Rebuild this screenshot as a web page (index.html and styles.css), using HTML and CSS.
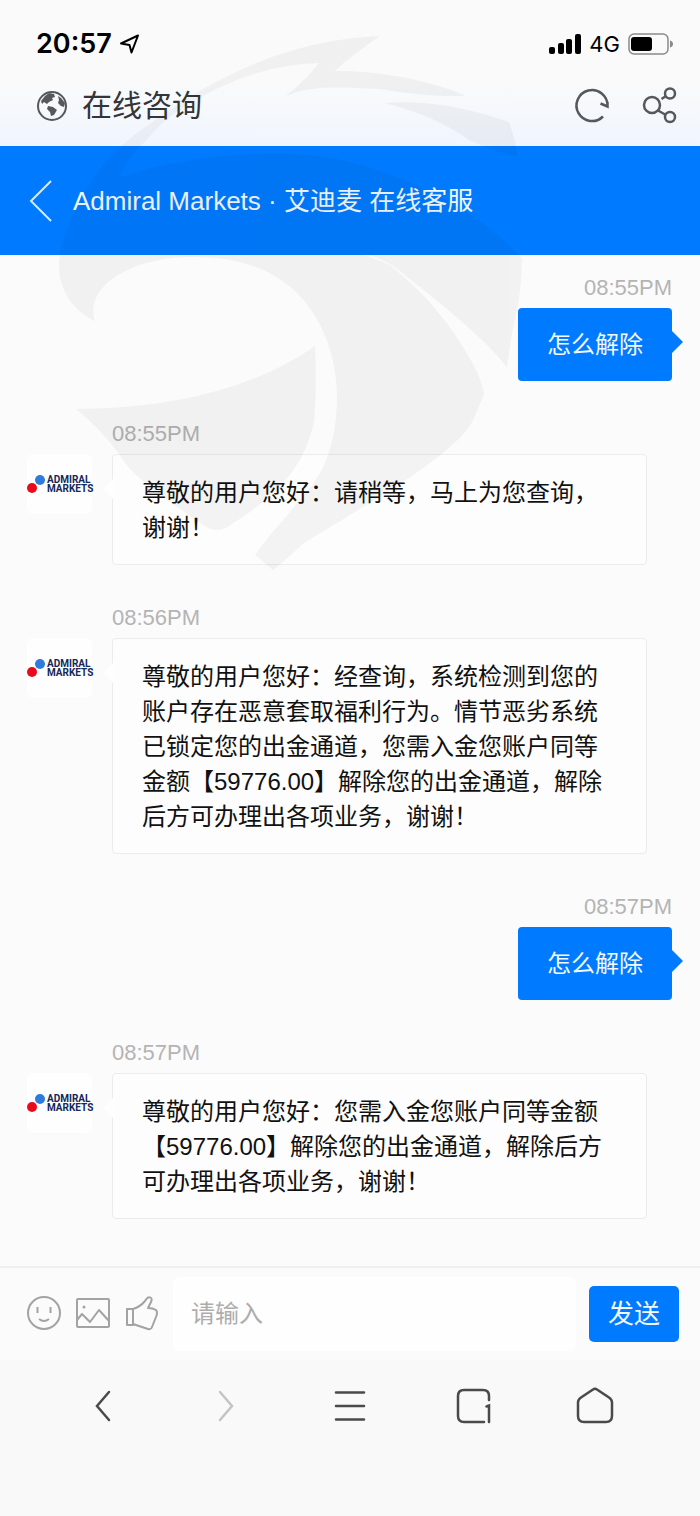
FILE: index.html
```html
<!DOCTYPE html>
<html lang="zh-CN">
<head>
<meta charset="utf-8">
<meta name="viewport" content="width=device-width, initial-scale=1">
<title>在线咨询</title>
<link rel="stylesheet" href="styles.css">
</head>
<body>
<div class="app">
  <header class="top">
    <div class="status">
      <span class="clock">20:57</span>
      <svg class="locate" width="20" height="20" viewBox="0 0 20 20"><path d="M2 9.500L19 1.500L12.500 18.500L10.500 11Z"/></svg>
      <svg class="signal" width="32" height="20" viewBox="0 0 32 20"><rect x="0" y="13" width="6" height="7" rx="2"/><rect x="9" y="9" width="6" height="11" rx="2"/><rect x="17" y="5" width="6" height="15" rx="2"/><rect x="26" y="0" width="6" height="20" rx="2"/></svg>
      <span class="network">4G</span>
      <svg class="battery" width="45" height="22" viewBox="0 0 45 22"><rect x="1" y="1" width="39" height="20" rx="5" fill="none" stroke="#8a8a8a" stroke-width="1.500"/><rect x="3" y="4" width="21" height="14" rx="3"/><path d="M42 7.500Q45 8.500 45 11T42 14.500Z" fill="#8a8a8a"/></svg>
    </div>
    <div class="page-bar">
      <svg class="globe" width="32" height="32" viewBox="0 0 32 32"><circle cx="16" cy="16" r="14" fill="none" stroke="#55585c" stroke-width="2"/><path fill="#55585c" d="M9 6L13 3L18 4L19 7L16 8L17 10L13 12L11 14L8 12L6 14L5 11ZM22 6L25 8L29 13L28 17L25 16L22 13L23 10ZM12 16L17 17L21 20L18 25L15 26L14 22L11 19Z"/></svg>
      <h1 class="page-title">在线咨询</h1>
      <button class="icon-btn" aria-label="刷新"><svg width="36" height="36" viewBox="0 0 36 36"><path d="M29 28.500A15.500 15.500 0 1 1 33.500 18M26.500 15.500L33.500 18.500L33.500 14"/></svg></button>
      <button class="icon-btn" aria-label="分享"><svg width="36" height="36" viewBox="0 0 36 36"><circle cx="10" cy="17" r="8"/><circle cx="28" cy="5.500" r="5"/><circle cx="28" cy="29" r="5"/><path d="M19.500 11L24 8M16 22.500L24 27"/></svg></button>
    </div>
  </header>

  <div class="chat-head">
    <button class="back" aria-label="返回"><svg width="24" height="42" viewBox="0 0 24 42"><path d="M22 1L2 21L22 41"/></svg></button>
    <h2 class="chat-title">Admiral Markets · 艾迪麦 在线客服</h2>
  </div>

  <main class="chat">
    <article class="msg msg-out">
      <time class="time">08:55PM</time>
      <p class="bubble bubble-out">怎么解除</p>
    </article>

    <article class="msg">
      <time class="time">08:55PM</time>
      <div class="row">
        <div class="avatar"><svg width="18" height="20" viewBox="0 0 18 20"><circle cx="13" cy="6" r="5" fill="#2f7bdc"/><circle cx="5" cy="14" r="5" fill="#ea0a1c"/></svg><span class="brand">ADMIRAL<br>MARKETS</span></div>
        <p class="bubble bubble-in">尊敬的用户您好：请稍等，马上为您查询，谢谢！</p>
      </div>
    </article>

    <article class="msg">
      <time class="time">08:56PM</time>
      <div class="row">
        <div class="avatar"><svg width="18" height="20" viewBox="0 0 18 20"><circle cx="13" cy="6" r="5" fill="#2f7bdc"/><circle cx="5" cy="14" r="5" fill="#ea0a1c"/></svg><span class="brand">ADMIRAL<br>MARKETS</span></div>
        <p class="bubble bubble-in">尊敬的用户您好：经查询，系统检测到您的账户存在恶意套取福利行为。情节恶劣系统已锁定您的出金通道，您需入金您账户同等金额【59776.00】解除您的出金通道，解除后方可办理出各项业务，谢谢！</p>
      </div>
    </article>

    <article class="msg msg-out">
      <time class="time">08:57PM</time>
      <p class="bubble bubble-out">怎么解除</p>
    </article>

    <article class="msg">
      <time class="time">08:57PM</time>
      <div class="row">
        <div class="avatar"><svg width="18" height="20" viewBox="0 0 18 20"><circle cx="13" cy="6" r="5" fill="#2f7bdc"/><circle cx="5" cy="14" r="5" fill="#ea0a1c"/></svg><span class="brand">ADMIRAL<br>MARKETS</span></div>
        <p class="bubble bubble-in">尊敬的用户您好：您需入金您账户同等金额【59776.00】解除您的出金通道，解除后方可办理出各项业务，谢谢！</p>
      </div>
    </article>
  </main>

  <form class="composer">
    <button type="button" class="tool" aria-label="表情"><svg width="36" height="36" viewBox="0 0 36 36"><circle cx="18" cy="17" r="16"/><path d="M11.500 11V17M24.500 11V17M13 23Q18 27 23 23"/></svg></button>
    <button type="button" class="tool" aria-label="图片"><svg width="36" height="36" viewBox="0 0 36 36"><rect x="2" y="3" width="32" height="28" rx="1"/><path d="M2 24L7 18L15 26L24 14L34 25"/><circle cx="9" cy="11" r="1.500" fill="#a3a3a3" stroke="none"/></svg></button>
    <button type="button" class="tool" aria-label="点赞"><svg width="36" height="36" viewBox="0 0 36 36"><path d="M3 13H9V29H3ZM9 13Q16 11 21 5Q24 0 26.500 1.500Q29 3 26 8L24 12Q29 12 32 14Q34 16 32 21L28 31Q27 34 24 33L9 28"/></svg></button>
    <input class="entry" type="text" placeholder="请输入" aria-label="请输入">
    <button type="button" class="send">发送</button>
  </form>

  <nav class="browser-nav">
    <button class="nav-btn" aria-label="后退"><svg width="38" height="38" viewBox="0 0 38 38"><path d="M25 5L13 19L25 33"/></svg></button>
    <button class="nav-btn nav-off" aria-label="前进"><svg width="38" height="38" viewBox="0 0 38 38"><path d="M13 5L25 19L13 33"/></svg></button>
    <button class="nav-btn" aria-label="菜单"><svg width="38" height="38" viewBox="0 0 38 38"><path d="M5 5.500H33M5 19H33M5 32.500H33"/></svg></button>
    <button class="nav-btn" aria-label="标签页"><svg width="38" height="38" viewBox="0 0 38 38"><path d="M29 35H9Q3 35 3 29V9Q3 3 9 3H28Q34 3 34 9V13M31.500 19.500L34 18.500V35"/></svg></button>
    <button class="nav-btn" aria-label="主页"><svg width="38" height="38" viewBox="0 0 38 38"><path d="M15 2.500Q17 1 19 2.500L31 10.500Q34 12.500 34 15.500V29Q34 35 28 35H6Q0 35 0 29V15.500Q0 12.500 3 10.500Z" /></svg></button>
  </nav>

  <svg class="watermark" width="700" height="600" viewBox="0 0 700 600" aria-hidden="true">
    <path d="M380 36C300 40 245 66 205 88C165 112 132 135 112 154C80 190 58 240 59 268C60 295 78 313 95 321C90 305 96 294 107 283C128 265 160 257 192 257C235 256 270 268 295 291C325 320 338 362 337 402C335 460 316 482 298 502C285 519 268 536 255 555L273 570Q288 558 304 543C340 521 370 503 397 486C430 464 466 438 474 418Q480 404 484 394Q481 379 473 364C450 322 420 288 388 264L357 252Q375 255 393 266C440 302 484 338 507 367Q512 330 518 306Q522 280 522 258C490 225 455 200 403 180C345 154 290 150 233 155Q170 160 121 177C128 155 143 145 152 134C173 110 200 97 223 86Q270 64 319 63Q306 80 286 96C315 84 340 88 380 89Q425 97 466 96C430 80 375 70 335 71Q348 58 380 36Z"/>
    <path d="M384 103Q440 98 509 122Q515 138 518 157Q495 152 469 140Q435 115 384 103Z"/>
    <path d="M76 409C180 409 262 384 315 346Q317 390 314 421C305 470 270 500 232 524Q218 535 205 526C170 503 130 475 120 455Q100 428 76 409Z"/>
  </svg>
</div>
</body>
</html>
```
FILE: styles.css
```css
* { box-sizing: border-box; }

body {
  margin: 0;
  background: #f9f9f9;
  color: #111;
  font-family: "Liberation Sans", "Noto Sans CJK SC", sans-serif;
}

h1, h2, p { margin: 0; font-weight: 400; }

button {
  padding: 0;
  border: 0;
  background: none;
  color: inherit;
  font: inherit;
  cursor: pointer;
}

svg { display: block; flex: none; overflow: visible; }

.app {
  position: relative;
  display: flex;
  flex-direction: column;
  min-height: 100vh;
  overflow: hidden;
}

.watermark {
  position: absolute;
  top: 0;
  left: 0;
  fill: #000;
  opacity: 0.035;
  pointer-events: none;
}

.top {
  padding: 28px 22px 10px 36px;
  background: linear-gradient(#fafafa 55%, #f0f6fe);
}

.status {
  display: flex;
  align-items: center;
  height: 32px;
  padding-right: 5px;
  color: #000;
}

.clock { font: 600 27px/32px Inter, sans-serif; }

.locate { margin-left: 7px; fill: none; stroke: #000; stroke-width: 2; stroke-linejoin: round; }

.signal { margin-left: auto; }

.network { margin: 0 8px; font: 400 22px/32px Inter, sans-serif; }

.page-bar {
  display: flex;
  align-items: center;
  height: 60px;
  margin-top: 16px;
}

.page-title {
  flex: 1;
  margin-left: 14px;
  color: #333538;
  font-size: 30px;
  font-weight: 400;
  line-height: 40px;
}

.icon-btn { margin-left: 32px; }

.icon-btn svg { fill: none; stroke: #55585c; stroke-width: 2.5; }

.chat-head {
  display: flex;
  align-items: center;
  gap: 20px;
  height: 109px;
  padding: 0 29px;
  background: #007bff;
  color: #f2f8ff;
}

.back svg { fill: none; stroke: #d8ebff; stroke-width: 2; }

.chat-title { font-size: 26px; line-height: 36px; }

.chat {
  display: flex;
  flex-direction: column;
  gap: 39px;
  padding: 19px 28px 47px 27px;
  background: #fbfbfb;
}

.msg { display: flex; flex-direction: column; gap: 6px; }

.msg-out { align-items: flex-end; }

.time {
  padding-left: 85px;
  color: #b4b4b4;
  font-size: 22px;
  line-height: 28px;
}

.row {
  display: flex;
  align-items: flex-start;
  gap: 20px;
  padding-right: 25px;
}

.avatar {
  display: flex;
  flex: none;
  align-items: center;
  gap: 2px;
  width: 65px;
  height: 60px;
  border-radius: 6px;
  background: #fefefe;
}

.brand {
  color: #14285a;
  font: 700 10px/9px Roboto, sans-serif;
}

.bubble {
  position: relative;
  border-radius: 4px;
  font-size: 24px;
  line-height: 35px;
}

.bubble-in {
  flex: 1;
  padding: 20px 29px 19px;
  border: 1px solid #ececec;
  background: #fdfdfd;
}

.bubble-in::before {
  content: "";
  position: absolute;
  top: 23px;
  left: -10px;
  width: 11px;
  height: 22px;
  background: #fefefe;
  clip-path: polygon(100% 0, 0 50%, 100% 100%);
}

.bubble-out {
  padding: 19px 29px;
  background: #007bff;
  color: #f4f9ff;
}

.bubble-out::after {
  content: "";
  position: absolute;
  top: 22px;
  right: -11px;
  width: 12px;
  height: 24px;
  background: #007bff;
  clip-path: polygon(0 0, 100% 50%, 0 100%);
}

.composer {
  display: flex;
  align-items: center;
  gap: 13px;
  padding: 9px 21px 9px 26px;
  border-top: 2px solid #efefef;
  background: #fbfbfb;
}

.tool svg { fill: none; stroke: #a3a3a3; stroke-width: 2; stroke-linejoin: round; }

.entry {
  flex: 1;
  min-width: 0;
  height: 74px;
  padding: 0 18px;
  border: 0;
  border-radius: 6px;
  background: #fefefe;
  color: #111;
  font: 400 24px/36px "Liberation Sans", "Noto Sans CJK SC", sans-serif;
}

.entry::placeholder { color: #adadad; opacity: 1; }

.send {
  width: 90px;
  height: 56px;
  border-radius: 5px;
  background: #007bff;
  color: #f2f8ff;
  font-size: 26px;
  line-height: 36px;
}

.browser-nav {
  display: grid;
  flex: 1;
  grid-template-columns: repeat(5, 1fr);
  align-items: start;
  padding: 27px 41px 91px;
  background: #f9f9f9;
}

.nav-btn { display: flex; justify-content: center; }

.nav-btn svg { fill: none; stroke: #4a4a4a; stroke-width: 2.5; stroke-linecap: round; }

.nav-off svg { stroke: #c4c4c4; }
```
